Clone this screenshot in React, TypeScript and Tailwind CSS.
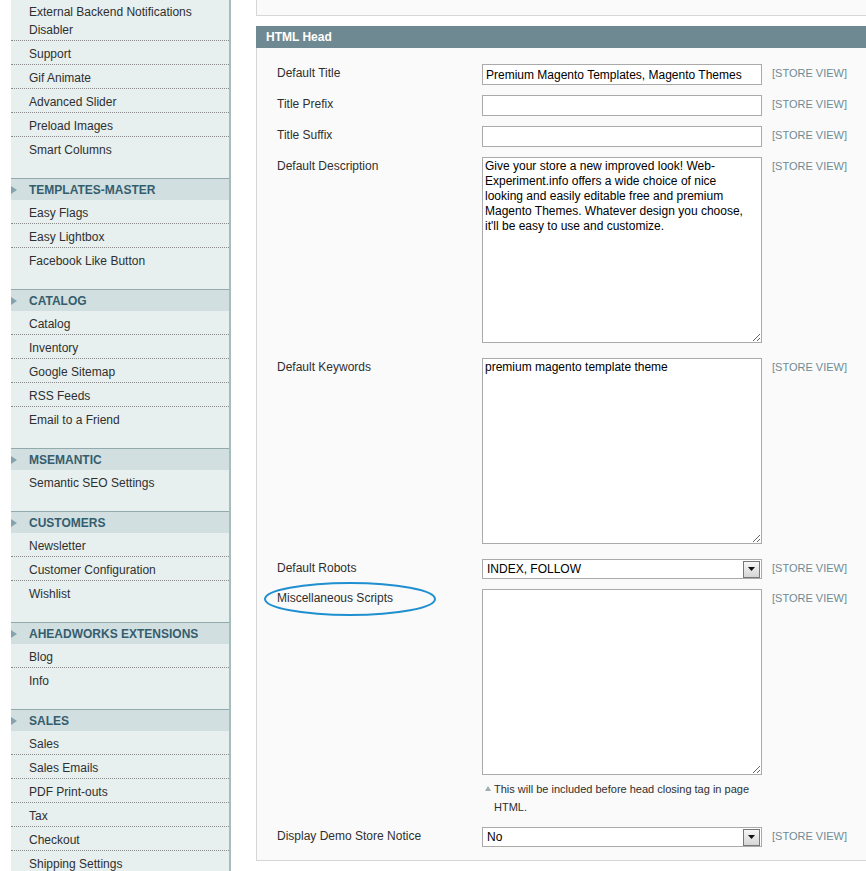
import React from 'react'

const groups: { title: string | null; items: string[] }[] = [
  {
    title: null,
    items: ['External Backend Notifications Disabler', 'Support', 'Gif Animate', 'Advanced Slider', 'Preload Images', 'Smart Columns'],
  },
  { title: 'TEMPLATES-MASTER', items: ['Easy Flags', 'Easy Lightbox', 'Facebook Like Button'] },
  { title: 'CATALOG', items: ['Catalog', 'Inventory', 'Google Sitemap', 'RSS Feeds', 'Email to a Friend'] },
  { title: 'MSEMANTIC', items: ['Semantic SEO Settings'] },
  { title: 'CUSTOMERS', items: ['Newsletter', 'Customer Configuration', 'Wishlist'] },
  { title: 'AHEADWORKS EXTENSIONS', items: ['Blog', 'Info'] },
  { title: 'SALES', items: ['Sales', 'Sales Emails', 'PDF Print-outs', 'Tax', 'Checkout', 'Shipping Settings'] },
]

const description =
  "Give your store a new improved look! Web-Experiment.info offers a wide choice of nice looking and easily editable free and premium Magento Themes. Whatever design you choose, it'll be easy to use and customize."

function StoreView() {
  return <span className="ml-[10px] text-[11px] leading-[18px] text-[#6f8a96]">[STORE VIEW]</span>
}

function Label({ children }: { children: React.ReactNode }) {
  return <div className="w-[205px] shrink-0 leading-[18px]">{children}</div>
}

function TextInput({ value }: { value: string }) {
  return (
    <input
      readOnly
      value={value}
      className="block h-[21px] w-[280px] shrink-0 border border-[#aaaaaa] bg-white px-[3px] text-[12px] text-black outline-none"
    />
  )
}

function TextArea({ value }: { value: string }) {
  return (
    <textarea
      readOnly
      value={value}
      className="block h-[186px] w-[280px] resize border border-[#aaaaaa] bg-white pl-[2px] pr-[8px] py-[1px] text-[12px] leading-[15px] text-black outline-none"
    />
  )
}

function Select({ value }: { value: string }) {
  return (
    <div className="flex h-[20px] w-[280px] shrink-0 items-center border border-[#aaaaaa] bg-white pl-[4px]">
      <span className="flex-1 text-black">{value}</span>
      <span className="mr-px flex h-[17px] w-[17px] items-center justify-center border border-[#777] bg-linear-to-b from-[#f6f6f6] to-[#d6d6d6]">
        <svg width="7" height="4" viewBox="0 0 7 4">
          <path d="M0 0h7L3.5 4z" fill="#111" />
        </svg>
      </span>
    </div>
  )
}

export default function App() {
  return (
    <div className="relative flex h-[871px] w-[866px] overflow-hidden bg-white font-['Liberation_Sans',Arial,sans-serif] text-[12px] text-[#2f2f2f]">
      {/* left nav */}
      <aside className="-mt-px ml-[11px] w-[220px] shrink-0 self-start border-r-2 border-[#a6bcbd] bg-[#e7efef]">
        {groups.map((g, gi) => (
          <div key={gi}>
            {g.title && (
              <div className="flex h-[22px] items-center border-t border-[#93aaac] bg-[#d1dfe0]">
                <svg width="6" height="8" viewBox="0 0 6 8" className="shrink-0">
                  <path d="M0 0l6 4-6 4z" fill="#86a3ad" />
                </svg>
                <span className="ml-[12px] font-bold text-[#355d6e]">{g.title}</span>
              </div>
            )}
            <ul className="pb-[17px]">
              {g.items.map((item, i) => (
                <li
                  key={item}
                  className={
                    i < g.items.length - 1
                      ? 'border-b border-dotted border-[#8a8a8a] pb-px pl-[18px] pr-[20px] pt-[4px] leading-[18px]'
                      : 'pb-[2px] pl-[18px] pr-[20px] pt-[4px] leading-[18px]'
                  }
                >
                  {item}
                </li>
              ))}
            </ul>
          </div>
        ))}
      </aside>

      {/* main content */}
      <main className="ml-[25px] w-[640px] shrink-0">
        <div className="h-[16px] border-x border-b border-[#d6d6d6] bg-[#fafafa]" />

        <div className="mt-[10px] h-[22px] bg-[#6f8992] pl-[10px] font-bold leading-[22px] text-white">HTML Head</div>

        <div className="border-x border-b border-[#d6d6d6] bg-[#fafafa] pb-[13px] pl-[20px] pt-[16px]">
          <div className="mb-[10px] flex items-start">
            <Label>Default Title</Label>
            <TextInput value="Premium Magento Templates, Magento Themes" />
            <StoreView />
          </div>
          <div className="mb-[10px] flex items-start">
            <Label>Title Prefix</Label>
            <TextInput value="" />
            <StoreView />
          </div>
          <div className="mb-[10px] flex items-start">
            <Label>Title Suffix</Label>
            <TextInput value="" />
            <StoreView />
          </div>
          <div className="mb-[15px] flex items-start">
            <Label>Default Description</Label>
            <TextArea value={description} />
            <StoreView />
          </div>
          <div className="mb-[15px] flex items-start">
            <Label>Default Keywords</Label>
            <TextArea value="premium magento template theme" />
            <StoreView />
          </div>
          <div className="mb-[10px] flex items-start">
            <Label>Default Robots</Label>
            <Select value="INDEX, FOLLOW" />
            <StoreView />
          </div>
          <div className="mb-[11px] flex items-start">
            <Label>Miscellaneous Scripts</Label>
            <div className="w-[280px] shrink-0">
              <TextArea value="" />
              <div className="mt-[5px] flex text-[11px] leading-[18px]">
                <span className="w-[12px] shrink-0 pl-[3px] pt-[6px]">
                  <svg width="6" height="5" viewBox="0 0 6 5" className="block">
                    <path d="M3 0l3 5H0z" fill="#9fadb2" />
                  </svg>
                </span>
                <span>This will be included before head closing tag in page HTML.</span>
              </div>
            </div>
            <StoreView />
          </div>
          <div className="flex items-start">
            <Label>Display Demo Store Notice</Label>
            <Select value="No" />
            <StoreView />
          </div>
        </div>
      </main>

      {/* annotation ring */}
      <svg className="pointer-events-none absolute left-[263px] top-[580px]" width="174" height="38" viewBox="0 0 174 38">
        <ellipse cx="87" cy="19" rx="85" ry="16" fill="none" stroke="#1f8fd0" strokeWidth="2" />
      </svg>
    </div>
  )
}
